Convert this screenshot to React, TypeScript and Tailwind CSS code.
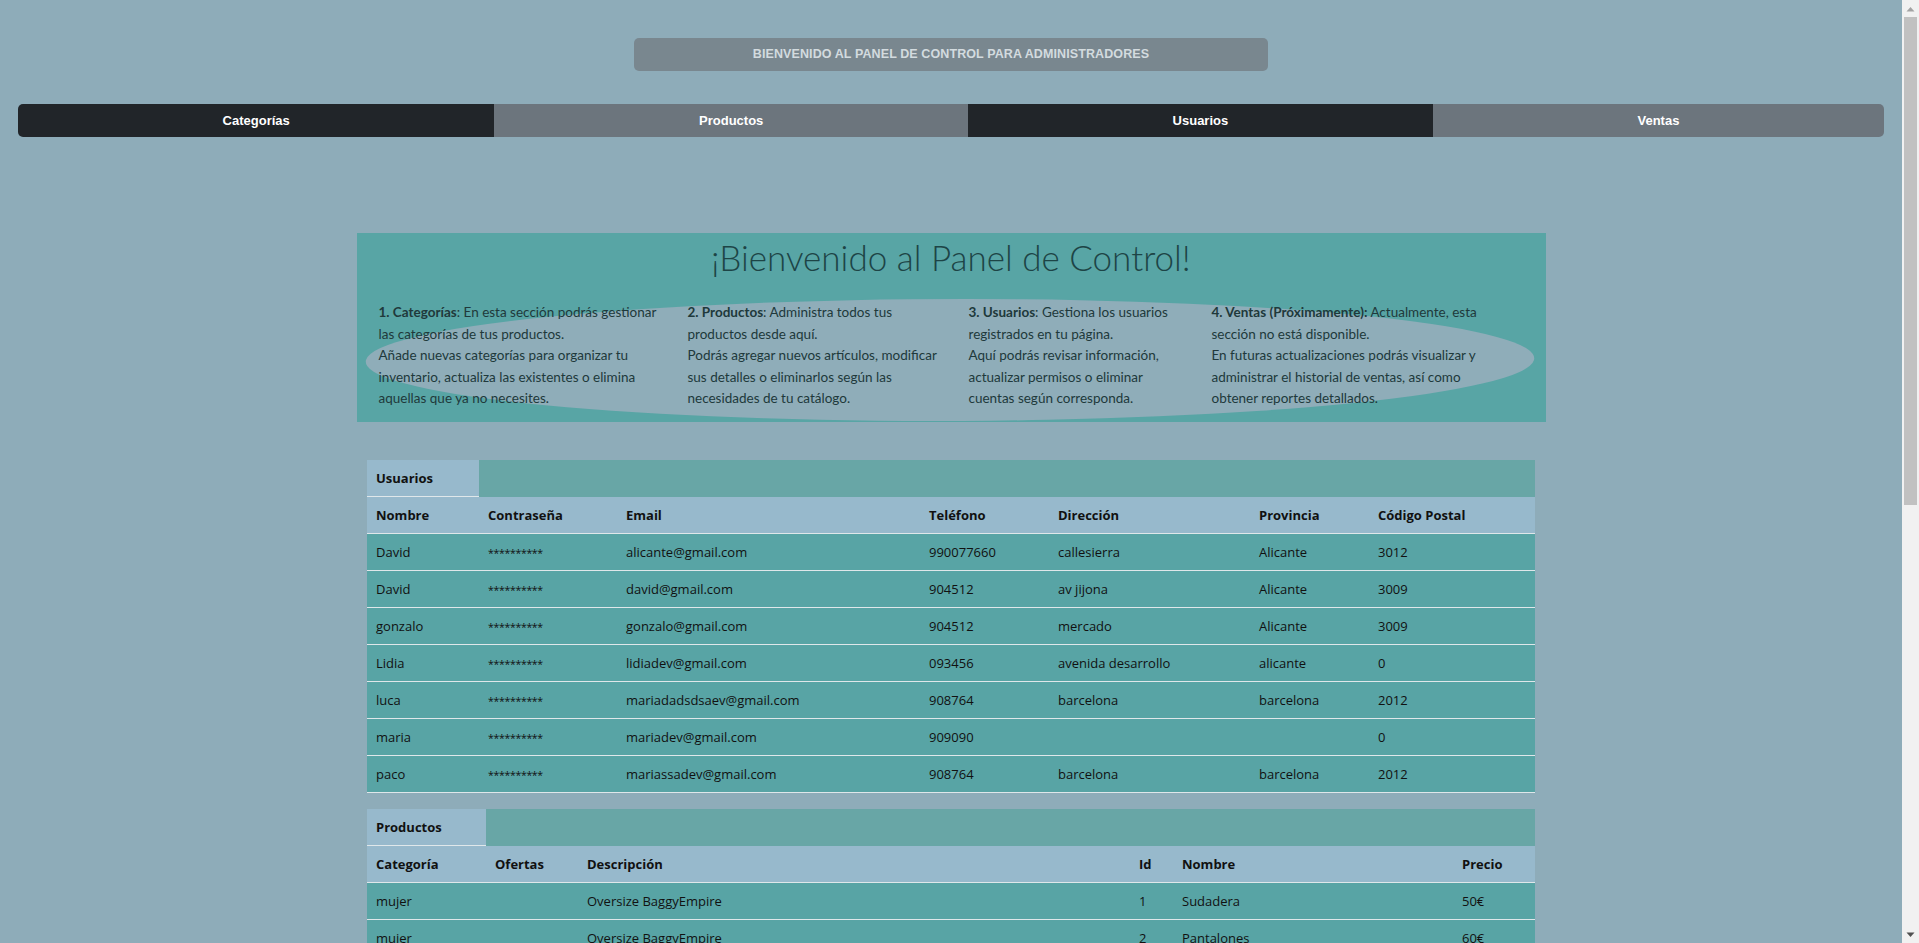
import React from "react";

const users = [
  ["David", "**********", "alicante@gmail.com", "990077660", "callesierra", "Alicante", "3012"],
  ["David", "**********", "david@gmail.com", "904512", "av jijona", "Alicante", "3009"],
  ["gonzalo", "**********", "gonzalo@gmail.com", "904512", "mercado", "Alicante", "3009"],
  ["Lidia", "**********", "lidiadev@gmail.com", "093456", "avenida desarrollo", "alicante", "0"],
  ["luca", "**********", "mariadadsdsaev@gmail.com", "908764", "barcelona", "barcelona", "2012"],
  ["maria", "**********", "mariadev@gmail.com", "909090", "", "", "0"],
  ["paco", "**********", "mariassadev@gmail.com", "908764", "barcelona", "barcelona", "2012"],
];

const products = [
  ["mujer", "", "Oversize BaggyEmpire", "1", "Sudadera", "50€"],
  ["mujer", "", "Oversize BaggyEmpire", "2", "Pantalones", "60€"],
];

const userCols = [112, 138, 303, 129, 201, 119, 166];
const userHeads = ["Nombre", "Contraseña", "Email", "Teléfono", "Dirección", "Provincia", "Código Postal"];
const prodCols = [119, 92, 552, 43, 280, 82];
const prodHeads = ["Categoría", "Ofertas", "Descripción", "Id", "Nombre", "Precio"];

function DataTable({ title, cols, heads, rows }: { title: string; cols: number[]; heads: string[]; rows: string[][] }) {
  return (
    <table className="table-fixed border-collapse w-[1168px] mx-auto text-[13px] leading-[20px] text-[#111]" style={{ fontFamily: '"Open Sans", "Noto Sans", sans-serif' }}>
      <colgroup>
        {cols.map((w, i) => (
          <col key={i} style={{ width: w }} />
        ))}
      </colgroup>
      <thead>
        <tr>
          <th className="bg-[#97b9cc] text-left font-bold px-[9px] py-2 border-b border-[#dfe7ea]">{title}</th>
          <th colSpan={cols.length - 1} className="bg-[#68a6a6] py-2"></th>
        </tr>
        <tr className="bg-[#97b9cc]">
          {heads.map((h, i) => (
            <th key={i} className="text-left font-bold px-[9px] py-2 border-b border-[#dfe7ea] whitespace-nowrap">
              {h}
            </th>
          ))}
        </tr>
      </thead>
      <tbody>
        {rows.map((r, i) => (
          <tr key={i} className="bg-[#58a4a5]">
            {r.map((c, j) =>
              c.startsWith("*") ? (
                <td key={j} className="px-[9px] py-2 border-b border-[#dfe7ea] whitespace-nowrap align-top">
                  <span className="text-[10.5px] leading-[16px] tracking-[-0.3px]">{c}</span>
                </td>
              ) : (
                <td key={j} className="px-[9px] py-2 border-b border-[#dfe7ea] whitespace-nowrap">
                  {c}
                </td>
              )
            )}
          </tr>
        ))}
      </tbody>
    </table>
  );
}

const bodyFont = { fontFamily: 'Lato, "Liberation Sans", sans-serif' };

function Scrollbar() {
  return (
    <div className="fixed top-0 right-0 w-[17px] h-screen bg-[#f1f1f1] flex flex-col">
      <div className="h-[17px] flex items-center justify-center">
        <svg width="9" height="6" viewBox="0 0 9 6">
          <path d="M0.5 5.5 L4.5 1 L8.5 5.5 Z" fill="#a3a3a3" />
        </svg>
      </div>
      <div className="h-[488px] mx-[2px] bg-[#c1c1c1]" />
      <div className="flex-1" />
      <div className="h-[17px] flex items-center justify-center">
        <svg width="9" height="6" viewBox="0 0 9 6">
          <path d="M0.5 0.5 L4.5 5 L8.5 0.5 Z" fill="#505050" />
        </svg>
      </div>
    </div>
  );
}

export default function App() {
  return (
    <div className="min-h-[1756px] bg-[#8eacb9]">
      <div className="w-[1902px] pb-10">
        <div className="pt-[38px] flex justify-center">
          <div className="w-[634px] h-[33px] rounded-[5px] bg-[#79878f] flex items-center justify-center text-[12.5px] font-bold text-[#d3dbdf] tracking-[0.1px]" style={{ fontFamily: '"Liberation Sans", sans-serif' }}>
            BIENVENIDO AL PANEL DE CONTROL PARA ADMINISTRADORES
          </div>
        </div>

        <nav className="mt-[33px] mx-[18px] h-[33px] flex rounded-[5px] overflow-hidden text-white text-[13px] font-bold" style={{ fontFamily: '"Liberation Sans", sans-serif' }}>
          <div className="flex-auto bg-[#212529] flex items-center justify-center">Categorías</div>
          <div className="flex-auto bg-[#6c757d] flex items-center justify-center">Productos</div>
          <div className="flex-auto bg-[#212529] flex items-center justify-center">Usuarios</div>
          <div className="flex-auto bg-[#6c757d] flex items-center justify-center">Ventas</div>
        </nav>

        <section className="relative mt-[96px] mx-auto w-[1189px] h-[189px] bg-[#58a5a5] overflow-hidden">
          <svg className="absolute inset-0" width="1189" height="189" viewBox="0 0 1189 189">
            <g transform="translate(593 127) skewX(-15)">
              <ellipse cx="0" cy="0" rx="584" ry="61" fill="#8fadb9" />
            </g>
          </svg>
          <div className="relative">
            <h1 className="pt-0 text-center text-[35px] leading-[48px] font-light text-[#1d4446]" style={bodyFont}>
              ¡Bienvenido al Panel de Control!
            </h1>
            <div className="mt-[21px] pl-[22px] flex text-[13.5px] leading-[21.5px] text-[#20393b] whitespace-nowrap" style={bodyFont}>
              <div className="w-[309px]">
                <b>1. Categorías</b>: En esta sección podrás gestionar
                <br />
                las categorías de tus productos.
                <br />
                Añade nuevas categorías para organizar tu
                <br />
                inventario, actualiza las existentes o elimina
                <br />
                aquellas que ya no necesites.
              </div>
              <div className="w-[281px]">
                <b>2. Productos</b>: Administra todos tus
                <br />
                productos desde aquí.
                <br />
                Podrás agregar nuevos artículos, modificar
                <br />
                sus detalles o eliminarlos según las
                <br />
                necesidades de tu catálogo.
              </div>
              <div className="w-[243px]">
                <b>3. Usuarios</b>: Gestiona los usuarios
                <br />
                registrados en tu página.
                <br />
                Aquí podrás revisar información,
                <br />
                actualizar permisos o eliminar
                <br />
                cuentas según corresponda.
              </div>
              <div>
                <b>4. Ventas (Próximamente):</b> Actualmente, esta
                <br />
                sección no está disponible.
                <br />
                En futuras actualizaciones podrás visualizar y
                <br />
                administrar el historial de ventas, así como
                <br />
                obtener reportes detallados.
              </div>
            </div>
          </div>
        </section>

        <div className="mt-[38px]">
          <DataTable title="Usuarios" cols={userCols} heads={userHeads} rows={users} />
        </div>
        <div className="mt-[16px]">
          <DataTable title="Productos" cols={prodCols} heads={prodHeads} rows={products} />
        </div>
      </div>
      <Scrollbar />
    </div>
  );
}
